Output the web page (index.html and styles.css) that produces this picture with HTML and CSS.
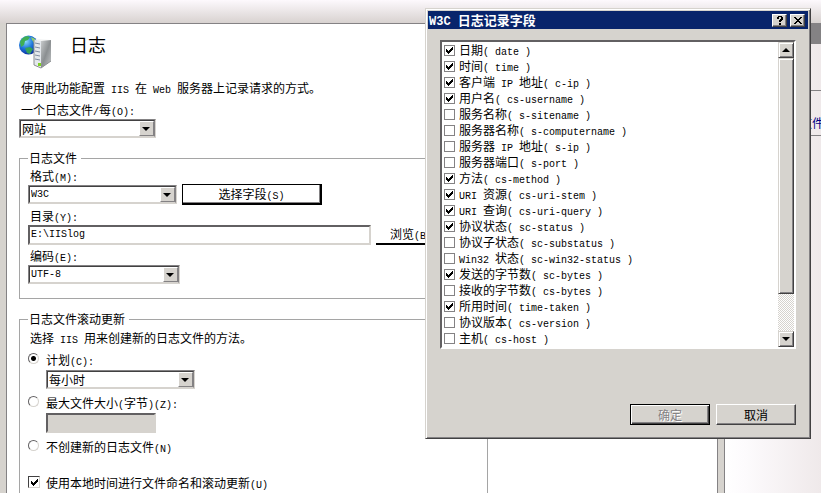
FILE: index.html
```html
<!DOCTYPE html>
<html lang="zh-CN">

<head>
   <meta charset="UTF-8">
   <meta name="viewport" content="width=device-width, initial-scale=1.0">
   <title>日志</title>
   <link rel="stylesheet" href="styles.css">
</head>

<body>
   <div class="manager">
      <div class="manager__bar"></div>
      <div class="manager__body">
         <main class="feature">
            <header class="feature__header">
               <svg class="feature__icon" width="34" height="34" viewBox="0 0 34 34" aria-hidden="true">
                  <defs>
                     <radialGradient id="globe" cx="0.35" cy="0.3" r="0.75">
                        <stop offset="0" stop-color="#8fdcfb" />
                        <stop offset="0.5" stop-color="#1f78dc" />
                        <stop offset="1" stop-color="#0a2a9c" />
                     </radialGradient>
                     <linearGradient id="side" x1="0" y1="0" x2="1" y2="1">
                        <stop offset="0" stop-color="#c9cccd" />
                        <stop offset="0.5" stop-color="#8b8f91" />
                        <stop offset="1" stop-color="#c3c6c7" />
                     </linearGradient>
                  </defs>
                  <circle cx="9.5" cy="10" r="9.5" fill="url(#globe)" />
                  <path d="M1 7 Q3 2 8 1 L11 2 L9 5 L6 6 L5 10 L2 12 Z" fill="#3fae55" />
                  <path d="M12 2 Q18 4 18 9 L15 8 L13 5 Z" fill="#8fd06a" />
                  <path d="M6 13 L11 12 L14 14 L11 19 L8 18 Z" fill="#35a35a" />
                  <path d="M15 5 L20 4 L32 5 L22 7 Z" fill="#f4f5f5" />
                  <path d="M15 5 L22 6 L22 33 L15 30 Z" fill="#e4e8ec" />
                  <path d="M22 6 L32 5 L32 26 L22 33 Z" fill="url(#side)" />
                  <path d="M16 8 L21 9 M16 12 L21 13 M16 16 L21 17 M16 20 L21 21 M16 24 L21 25" stroke="#7f8ca0" />
                  <path d="M15 5 L15 30 L22 33 L32 26" fill="none" stroke="#8c9092" />
                  <rect x="19" y="28" width="3" height="3" fill="#7ed321" />
               </svg>
               <h1 class="feature__title">日志</h1>
            </header>

            <p class="feature__text">使用此功能配置<span class="en"> IIS </span>在<span class="en"> Web </span>服务器上记录请求的方式。</p>

            <div class="field">
               <label class="field__label" for="per">一个日志文件<span class="en">/</span>每<span class="en">(O):</span></label>
               <span class="combo combo--small">
                  <select class="combo__select" id="per">
                     <option>网站</option>
                  </select>
               </span>
            </div>

            <fieldset class="group">
               <legend class="group__legend">日志文件</legend>
               <div class="field">
                  <label class="field__label" for="format">格式<span class="en">(M):</span></label>
                  <div class="field__row">
                     <span class="combo">
                        <select class="combo__select combo__select--en" id="format">
                           <option>W3C</option>
                        </select>
                     </span>
                     <button class="flat-button flat-button--focus" type="button">选择字段<span class="en">(S)</span></button>
                  </div>
               </div>
               <div class="field">
                  <label class="field__label" for="dir">目录<span class="en">(Y):</span></label>
                  <div class="field__row">
                     <input class="textbox textbox--path" id="dir" type="text" value="E:\IISlog">
                     <button class="flat-button" type="button">浏览<span class="en">(B)...</span></button>
                  </div>
               </div>
               <div class="field">
                  <label class="field__label" for="encoding">编码<span class="en">(E):</span></label>
                  <span class="combo combo--wide">
                     <select class="combo__select combo__select--en" id="encoding">
                        <option>UTF-8</option>
                     </select>
                  </span>
               </div>
            </fieldset>

            <fieldset class="group">
               <legend class="group__legend">日志文件滚动更新</legend>
               <p class="group__text">选择<span class="en"> IIS </span>用来创建新的日志文件的方法。</p>

               <div class="choice">
                  <input class="radio" type="radio" name="rollover" id="schedule" checked>
                  <label for="schedule">计划<span class="en">(C):</span></label>
                  <span class="combo choice__control">
                     <select class="combo__select" aria-label="计划">
                        <option>每小时</option>
                     </select>
                  </span>
               </div>
               <div class="choice">
                  <input class="radio" type="radio" name="rollover" id="size">
                  <label for="size">最大文件大小<span class="en">(</span>字节<span class="en">)(Z):</span></label>
                  <input class="textbox textbox--size choice__control" type="text" aria-label="最大文件大小" disabled>
               </div>
               <div class="choice">
                  <input class="radio" type="radio" name="rollover" id="none">
                  <label for="none">不创建新的日志文件<span class="en">(N)</span></label>
               </div>
               <div class="choice choice--local">
                  <input class="check" type="checkbox" id="local" checked>
                  <label for="local">使用本地时间进行文件命名和滚动更新<span class="en">(U)</span></label>
               </div>
            </fieldset>
         </main>

         <div class="splitter"></div>

         <aside class="actions">
            <div class="actions__title"></div>
            <div class="actions__section">
               <a class="actions__link" href="#">查看日志文件<span class="en">...</span></a>
            </div>
         </aside>
      </div>
   </div>

   <section class="dialog" role="dialog" aria-labelledby="dialog-title">
      <header class="dialog__bar">
         <h2 class="dialog__title" id="dialog-title"><span class="en en--title">W3C </span>日志记录字段</h2>
         <button class="bar-button" type="button" aria-label="帮助">
            <svg width="8" height="9" viewBox="0 0 8 9" shape-rendering="crispEdges">
               <path d="M2 0h4v1h1v3h-1v1h-1v1h-2v-2h1v-1h1v-2h-2v2h-2v-2h1z M3 7h2v2h-2z" />
            </svg>
         </button>
         <button class="bar-button" type="button" aria-label="关闭">
            <svg width="8" height="7" viewBox="0 0 8 7" shape-rendering="crispEdges">
               <path d="M0 0h2v1h1v1h2v-1h1v-1h2v1h-1v1h-1v1h-1v1h1v1h1v1h1v1h-2v-1h-1v-1h-2v1h-1v1h-2v-1h1v-1h1v-1h1v-1h-1v-1h-1v-1h-1z" />
            </svg>
         </button>
      </header>

      <div class="list">
         <ul class="list__items">
            <li><label class="list__item"><input class="check check--flat" type="checkbox" checked><span>日期<span class="en">( date )</span></span></label></li>
            <li><label class="list__item"><input class="check check--flat" type="checkbox" checked><span>时间<span class="en">( time )</span></span></label></li>
            <li><label class="list__item"><input class="check check--flat" type="checkbox" checked><span>客户端<span class="en"> IP </span>地址<span class="en">( c-ip )</span></span></label></li>
            <li><label class="list__item"><input class="check check--flat" type="checkbox" checked><span>用户名<span class="en">( cs-username )</span></span></label></li>
            <li><label class="list__item"><input class="check check--flat" type="checkbox"><span>服务名称<span class="en">( s-sitename )</span></span></label></li>
            <li><label class="list__item"><input class="check check--flat" type="checkbox"><span>服务器名称<span class="en">( s-computername )</span></span></label></li>
            <li><label class="list__item"><input class="check check--flat" type="checkbox"><span>服务器<span class="en"> IP </span>地址<span class="en">( s-ip )</span></span></label></li>
            <li><label class="list__item"><input class="check check--flat" type="checkbox"><span>服务器端口<span class="en">( s-port )</span></span></label></li>
            <li><label class="list__item"><input class="check check--flat" type="checkbox" checked><span>方法<span class="en">( cs-method )</span></span></label></li>
            <li><label class="list__item"><input class="check check--flat" type="checkbox" checked><span><span class="en">URI </span>资源<span class="en">( cs-uri-stem )</span></span></label></li>
            <li><label class="list__item"><input class="check check--flat" type="checkbox" checked><span><span class="en">URI </span>查询<span class="en">( cs-uri-query )</span></span></label></li>
            <li><label class="list__item"><input class="check check--flat" type="checkbox" checked><span>协议状态<span class="en">( sc-status )</span></span></label></li>
            <li><label class="list__item"><input class="check check--flat" type="checkbox"><span>协议子状态<span class="en">( sc-substatus )</span></span></label></li>
            <li><label class="list__item"><input class="check check--flat" type="checkbox"><span><span class="en">Win32 </span>状态<span class="en">( sc-win32-status )</span></span></label></li>
            <li><label class="list__item"><input class="check check--flat" type="checkbox" checked><span>发送的字节数<span class="en">( sc-bytes )</span></span></label></li>
            <li><label class="list__item"><input class="check check--flat" type="checkbox"><span>接收的字节数<span class="en">( cs-bytes )</span></span></label></li>
            <li><label class="list__item"><input class="check check--flat" type="checkbox" checked><span>所用时间<span class="en">( time-taken )</span></span></label></li>
            <li><label class="list__item"><input class="check check--flat" type="checkbox"><span>协议版本<span class="en">( cs-version )</span></span></label></li>
            <li><label class="list__item"><input class="check check--flat" type="checkbox"><span>主机<span class="en">( cs-host )</span></span></label></li>
         </ul>
         <div class="scrollbar" aria-hidden="true">
            <div class="scrollbar__arrow scrollbar__arrow--up"></div>
            <div class="scrollbar__thumb"></div>
            <div class="scrollbar__track"></div>
            <div class="scrollbar__arrow"></div>
         </div>
      </div>

      <footer class="dialog__footer">
         <button class="button button--default" type="button" disabled>确定</button>
         <button class="button" type="button">取消</button>
      </footer>
   </section>
</body>

</html>
```
FILE: styles.css
```css
*,
*::before,
*::after {
   box-sizing: border-box;
}

html,
body {
   height: 100%;
   margin: 0;
}

body {
   position: relative;
   overflow: hidden;
   font-family: "Noto Sans CJK SC", sans-serif;
   font-size: 12px;
   line-height: 16px;
   color: #000;
   background-color: #d6d3ce;
}

h1,
h2,
p,
ul {
   margin: 0;
   padding: 0;
}

button,
input,
select {
   margin: 0;
   font: inherit;
   color: inherit;
   border-radius: 0;
}

/* half-width characters: exactly half of a 12px hanzi */
.en {
   font-family: "Liberation Mono", monospace;
   font-size: 10px;
   line-height: 1;
   white-space: pre;
}

.en--title {
   font-size: 12px;
}

/* main window */
.manager {
   height: 100%;
   display: flex;
   flex-direction: column;
}

.manager__bar {
   flex: none;
   height: 23px;
   background: linear-gradient(#fdf9fd, #d8d2d0);
}

.manager__body {
   flex: 1;
   min-height: 0;
   display: flex;
   padding-left: 6px;
}

.feature {
   flex: 1;
   min-width: 0;
   overflow: hidden;
   padding: 11px 12px;
   border-top: 1px solid #848284;
   border-left: 1px solid #848284;
   background-color: #fff;
}

.feature__header {
   display: flex;
   gap: 17px;
   height: 45px;
}

.feature__title {
   font-size: 18px;
   font-weight: 400;
   line-height: 18px;
}

.feature__text {
   padding: 0 2px;
   margin-bottom: 6px;
}

.field {
   display: flex;
   flex-direction: column;
   align-items: flex-start;
   gap: 1px;
   margin-bottom: 4px;
}

.field__label {
   padding: 0 2px;
}

.field__row {
   display: flex;
   align-items: center;
   gap: 5px;
   height: 19px;
}

/* combo box */
.combo {
   position: relative;
   display: block;
   width: 149px;
   height: 19px;
   border: 1px solid;
   border-color: #848284 #d6d3ce #d6d3ce #848284;
}

.combo--small {
   width: 137px;
}

.combo--wide {
   width: 152px;
}

.combo__select {
   appearance: none;
   display: block;
   width: 100%;
   height: 17px;
   padding: 0 17px 0 1px;
   border: 1px solid;
   border-color: #424142 #848284 #d6d3ce #424142;
   background-color: #fff;
   line-height: 15px;
}

.combo__select--en {
   font-family: "Liberation Mono", monospace;
   font-size: 10px;
}

.combo::before {
   content: "";
   position: absolute;
   top: 1px;
   right: 1px;
   width: 15px;
   height: 15px;
   border: 1px solid;
   border-color: #fff #848284 #848284 #fff;
   background-color: #d6d3ce;
   pointer-events: none;
}

.combo::after {
   content: "";
   position: absolute;
   top: 7px;
   right: 5px;
   border: 4px solid transparent;
   border-top-color: #000;
   border-bottom: none;
   pointer-events: none;
}

.textbox {
   height: 20px;
   padding: 0 1px;
   border: 2px solid;
   border-color: #626062 #d6d3ce #d6d3ce #626062;
   background-color: #fff;
}

.textbox:disabled {
   background-color: #d6d3ce;
}

.textbox--path {
   width: 343px;
   font-family: "Liberation Mono", monospace;
   font-size: 10px;
}

.textbox--size {
   width: 110px;
}

.flat-button {
   flex: none;
   width: 88px;
   height: 20px;
   padding: 0;
   border: none;
   border-bottom: 2px solid #000;
   background-color: #fff;
   line-height: 16px;
}

.flat-button--focus {
   width: 140px;
   height: 21px;
   border: 1px solid #000;
   border-right-width: 2px;
   border-bottom-width: 2px;
   box-shadow: inset -1px -1px #848284;
}

/* group boxes */
.group {
   max-width: 469px;
   min-width: 0;
   margin: 12px 0 0;
   padding: 2px 8px 10px;
   border: 1px solid #a5a5a5;
}

.group__legend {
   padding: 0 4px 0 1px;
}

.group__text {
   padding: 0 2px;
   margin: 1px 0 6px;
}

.choice {
   display: grid;
   grid-template-columns: 18px auto;
   justify-content: start;
   row-gap: 2px;
   margin-bottom: 6px;
}

.choice__control {
   grid-column: 2;
}

.choice--local {
   margin-top: 20px;
}

.radio {
   appearance: none;
   width: 11px;
   height: 11px;
   margin-top: 1px;
   border: 1px solid;
   border-color: #626062 #d6d3ce #d6d3ce #626062;
   border-radius: 50%;
   background-color: #fff;
}

.radio:checked {
   background-image: radial-gradient(circle, #000 2px, transparent 3px);
}

.check {
   appearance: none;
   flex: none;
   width: 12px;
   height: 12px;
   margin-top: 1px;
   padding: 2px;
   border: 1px solid;
   border-color: #424142 #d6d3ce #d6d3ce #424142;
   background-color: #fff;
}

.check--flat {
   width: 11px;
   height: 11px;
   margin-top: 2px;
   padding: 1px;
   border-color: #848284;
}

.check:checked::before {
   content: "";
   display: block;
   width: 7px;
   height: 7px;
   background-color: #000;
   clip-path: polygon(0 2px, 1px 2px, 1px 3px, 2px 3px, 2px 4px, 3px 4px, 3px 3px, 4px 3px, 4px 2px, 5px 2px, 5px 1px, 6px 1px, 6px 0, 7px 0, 7px 3px, 6px 3px, 6px 4px, 5px 4px, 5px 5px, 4px 5px, 4px 6px, 3px 6px, 3px 7px, 2px 7px, 2px 6px, 1px 6px, 1px 5px, 0 5px);
}

.splitter {
   flex: none;
   width: 8px;
   border: solid #848284;
   border-width: 0 1px;
   background-color: #d6d3ce;
}

/* actions pane */
.actions {
   flex: none;
   width: 96px;
   overflow: hidden;
   background: linear-gradient(to right, #fff, #fdfbfd 20%, #efe9ea);
}

.actions__title {
   height: 21px;
   margin-bottom: 46px;
   background-color: #848284;
}

.actions__section {
   padding: 24px 0 4px 27px;
   border: solid #848284;
   border-width: 1px 0;
}

.actions__link {
   color: #000084;
   text-decoration: none;
   white-space: nowrap;
}

/* dialog */
.dialog {
   position: absolute;
   top: 8px;
   right: 10px;
   width: 386px;
   padding: 1px;
   border: 1px solid;
   border-color: #d6d3ce #424142 #424142 #d6d3ce;
   background-color: #d6d3ce;
   box-shadow: inset 1px 1px #fff, inset -1px -1px #848284;
}

.dialog__bar {
   display: flex;
   align-items: center;
   gap: 3px;
   height: 18px;
   margin: 1px;
   padding: 0 3px 0 1px;
   background-color: #08246b;
}

.dialog__title {
   flex: 1;
   font-size: 13px;
   line-height: 18px;
   font-weight: 700;
   color: #fff;
}

.bar-button {
   display: flex;
   align-items: center;
   justify-content: center;
   width: 15px;
   height: 13px;
   padding: 0;
   border: 1px solid;
   border-color: #fff #424142 #424142 #fff;
   background-color: #d6d3ce;
   box-shadow: inset -1px -1px #848284;
}

.list {
   display: flex;
   margin: 11px 13px 0;
   border: 2px solid;
   border-color: #626062 #fff #fff #626062;
   background-color: #fff;
}

.list__items {
   flex: 1;
   padding-top: 1px;
   list-style: none;
}

.list__item {
   display: flex;
   align-items: flex-start;
   height: 16px;
   padding-left: 2px;
   line-height: 14px;
}

.list__item .check {
   margin-right: 4px;
}

.scrollbar {
   display: flex;
   flex-direction: column;
   width: 16px;
   background-color: #d6d3ce;
}

.scrollbar__arrow,
.scrollbar__thumb {
   border: 1px solid;
   border-color: #d6d3ce #424142 #424142 #d6d3ce;
   background-color: #d6d3ce;
   box-shadow: inset 1px 1px #fff, inset -1px -1px #848284;
}

.scrollbar__arrow {
   display: flex;
   align-items: center;
   justify-content: center;
   height: 16px;
}

.scrollbar__arrow::before {
   content: "";
   border: 4px solid transparent;
   border-top-color: #000;
   border-bottom: none;
}

.scrollbar__arrow--up::before {
   transform: rotate(180deg);
}

.scrollbar__thumb {
   flex: 235;
}

.scrollbar__track {
   flex: 37;
   background: repeating-conic-gradient(#fff 0 25%, #d6d3ce 0 50%) 0 0 / 2px 2px;
}

.dialog__footer {
   display: flex;
   justify-content: flex-end;
   gap: 6px;
   padding: 55px 13px 12px;
}

.button {
   width: 80px;
   height: 21px;
   padding: 0;
   border: 1px solid;
   border-color: #fff #424142 #424142 #fff;
   background-color: #d6d3ce;
   box-shadow: inset -1px -1px #848284;
   line-height: 18px;
}

.button--default {
   border-color: #000;
   box-shadow: inset 1px 1px #fff, inset -1px -1px #424142, inset -2px -2px #848284;
}

.button:disabled {
   color: #848284;
   text-shadow: 1px 1px #fff;
}
```
